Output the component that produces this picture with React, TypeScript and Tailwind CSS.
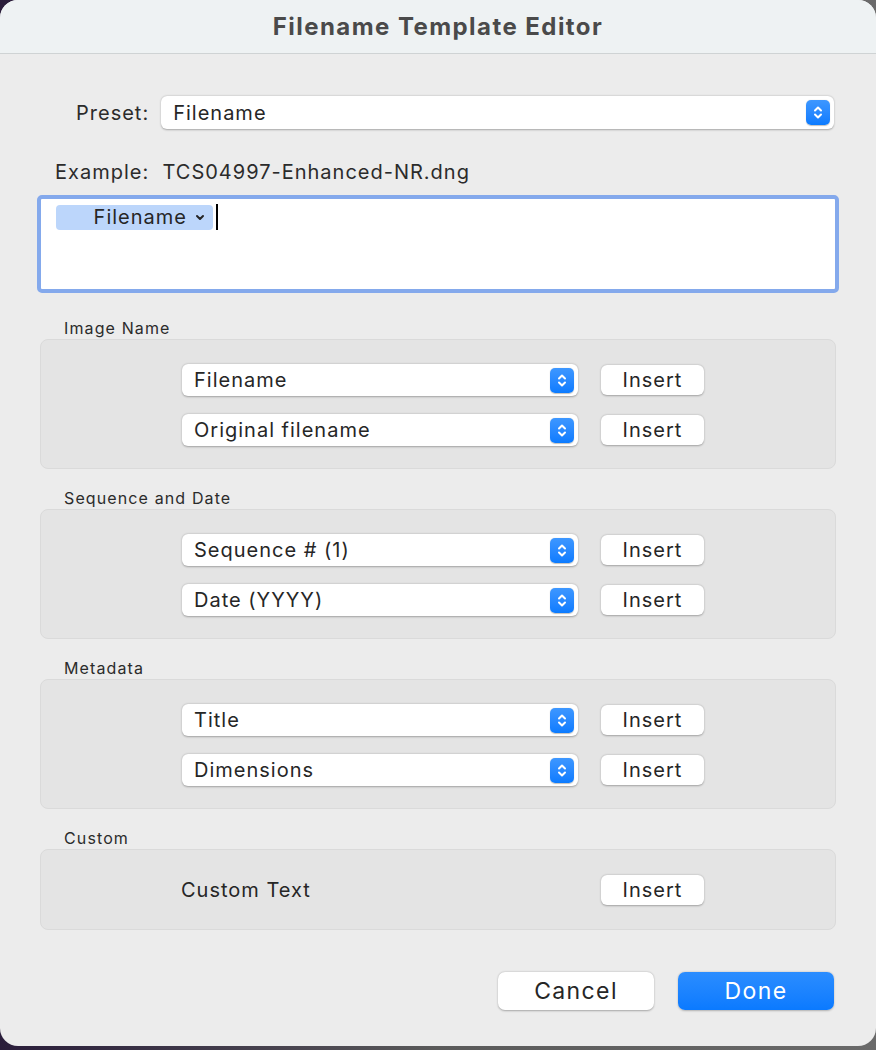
import React from "react";

const font = { fontFamily: "Inter, 'Noto Sans', sans-serif" };

function Stepper() {
  return (
    <span className="flex h-[25px] w-[24px] items-center justify-center rounded-[5px] bg-gradient-to-b from-[#3d97ff] to-[#0a7bff] shadow-[0_0.5px_1px_rgba(0,0,0,0.25)]">
      <svg width="12" height="17" viewBox="0 0 12 17" fill="none" stroke="white" strokeWidth="2" strokeLinecap="round" strokeLinejoin="round">
        <path d="M3 6.5 L6 3.5 L9 6.5" />
        <path d="M3 10.5 L6 13.5 L9 10.5" />
      </svg>
    </span>
  );
}

function Select({ value, className }: { value: string; className: string }) {
  return (
    <div
      className={`flex items-center justify-between rounded-[6px] bg-white pl-[12px] pr-[4px] text-[20px] tracking-[0.05em] text-[#262626] shadow-[0_0.5px_2px_rgba(0,0,0,0.3)] ${className}`}
    >
      <span className="leading-none">{value}</span>
      <Stepper />
    </div>
  );
}

function InsertButton() {
  return (
    <button className="flex h-[30px] w-[103px] items-center justify-center rounded-[6px] bg-white text-[20px] leading-none tracking-[0.05em] text-[#262626] shadow-[0_0.5px_2px_rgba(0,0,0,0.3)]">
      Insert
    </button>
  );
}

function Section({ title, rows }: { title: string; rows: string[] }) {
  return (
    <div className="mt-[25px]">
      <div className="ml-[64px] text-[16px] leading-[20px] tracking-[0.07em] text-[#2b2b2b]">{title}</div>
      <div className="ml-[40px] mt-[1px] flex h-[130px] w-[796px] flex-col gap-[18px] rounded-[8px] border border-[#dadada] bg-[#e4e4e4] pl-[141px] pt-[24px]">
        {rows.map((r) => (
          <div key={r} className="flex items-center gap-[23px]">
            <Select value={r} className="h-[32px] w-[396px]" />
            <InsertButton />
          </div>
        ))}
      </div>
    </div>
  );
}

export default function App() {
  return (
    <div className="h-[1050px] w-[876px] bg-gradient-to-r from-[#2a1d3a] via-[#5a5a5a] to-[#6a6a6a]" style={font}>
      <div className="flex h-[1046px] w-[876px] flex-col overflow-hidden rounded-[18px] bg-[#ececec]">
        <div className="flex h-[54px] shrink-0 items-center justify-center border-b border-[#cfd3d4] bg-[#eef2f3]">
          <h1 className="text-[24px] font-bold tracking-[0.06em] text-[#4a4a4a]">Filename Template Editor</h1>
        </div>

        <div className="mt-[42px] flex items-center pl-[76px] pr-[42px]">
          <span className="mr-[12px] text-[20px] tracking-[0.05em] text-[#2b2b2b]">Preset:</span>
          <Select value="Filename" className="h-[33px] flex-1" />
        </div>

        <div className="ml-[55px] mt-[31px] text-[20px] leading-[24px] tracking-[0.05em] text-[#2b2b2b]">
          Example:&nbsp; TCS04997-Enhanced-NR.dng
        </div>

        <div className="ml-[37px] mt-[11px] h-[98px] w-[802px] rounded-[5px] border-[4px] border-[#84a9ec] bg-white px-[15px] pt-[5px]">
          <div className="flex items-center">
            <span className="flex h-[25px] w-[157px] items-center justify-end gap-[8px] rounded-[4px] bg-[#bcd6fb] pr-[8px] text-[20px] tracking-[0.05em] text-[#262626]">
              Filename
              <svg width="10" height="7" viewBox="0 0 10 7" fill="none" stroke="#262626" strokeWidth="2" strokeLinecap="round" strokeLinejoin="round">
                <path d="M2 2 L5 5 L8 2" />
              </svg>
            </span>
            <span className="ml-[3px] h-[26px] w-[2px] bg-black" />
          </div>
        </div>

        <Section title="Image Name" rows={["Filename", "Original filename"]} />
        <div className="-mt-[6px]">
          <Section title="Sequence and Date" rows={["Sequence # (1)", "Date (YYYY)"]} />
        </div>
        <div className="-mt-[6px]">
          <Section title="Metadata" rows={["Title", "Dimensions"]} />
        </div>

        <div className="mt-[19px]">
          <div className="ml-[64px] text-[16px] leading-[20px] tracking-[0.07em] text-[#2b2b2b]">Custom</div>
          <div className="ml-[40px] mt-[1px] flex h-[81px] w-[796px] items-center rounded-[8px] border border-[#dadada] bg-[#e4e4e4] pl-[140px]">
            <span className="w-[420px] text-[20px] tracking-[0.05em] text-[#262626]">Custom Text</span>
            <InsertButton />
          </div>
        </div>

        <div className="mt-[42px] flex justify-end gap-[24px] pr-[42px]">
          <button className="flex h-[38px] w-[156px] items-center justify-center rounded-[7px] bg-white text-[23px] tracking-[0.06em] text-[#262626] shadow-[0_0.5px_2px_rgba(0,0,0,0.3)]">
            Cancel
          </button>
          <button className="flex h-[38px] w-[156px] items-center justify-center rounded-[7px] bg-gradient-to-b from-[#2a8dff] to-[#0a7aff] text-[23px] tracking-[0.06em] text-white shadow-[0_0.5px_2px_rgba(0,0,0,0.25)]">
            Done
          </button>
        </div>
      </div>
    </div>
  );
}
